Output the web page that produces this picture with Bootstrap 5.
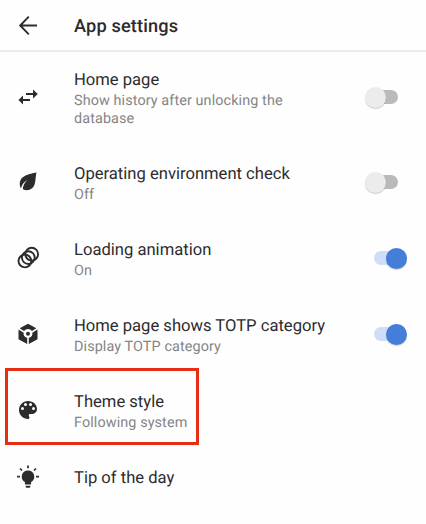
<!DOCTYPE html>
<html lang="en">
<head>
<meta charset="utf-8">
<meta name="viewport" content="width=device-width, initial-scale=1">
<title>App settings</title>
<link href="https://cdn.jsdelivr.net/npm/bootstrap@5.3.0/dist/css/bootstrap.min.css" rel="stylesheet">
<style>
body{font-family:Roboto,"Noto Sans",sans-serif;background:#fefefe;color:#2c2c2e;overflow:hidden;text-rendering:geometricPrecision}
.app-bar{height:52px;border-bottom:2px solid #ececec;padding-left:16px}
.app-title{font-size:18.2px;font-weight:500;letter-spacing:.15px;line-height:24px;margin:3px 0 0 34px}
.setting{height:76px;padding:0 19px 0 16px;border:0;background:none;color:inherit}
.setting-tall{height:92px;padding-bottom:2px}
.setting-short{height:58px}
.setting svg,.app-bar svg{width:24px;height:24px;flex:none;fill:#2c2c2e}
.setting-text{margin-left:34px;margin-top:3px;width:270px}
.setting-tall .setting-text{margin-top:3px}
.setting-name{font-size:16.6px;line-height:22px;white-space:nowrap}
.setting-note{font-size:14.4px;line-height:17.5px;letter-spacing:.1px;color:#858585;max-width:225px}
.toggle{width:42px;height:22px;flex:none}
.toggle::before{content:"";width:28px;height:14px;border-radius:7px;background:#bababa;margin-left:5px}
.toggle-knob{width:21px;height:21px;border-radius:50%;background:#ececec;box-shadow:0 1px 1px #0003;margin-left:-33px}
.toggle-on::before{background:#d0ddf6;margin-left:9px}
.toggle-on .toggle-knob{background:#447ed9;margin-left:-16px}
.highlight{width:194px;height:77px;left:5px;top:-4px;border:3px solid #e72d13}
</style>
<script src="https://cdn.jsdelivr.net/npm/bootstrap@5.3.0/dist/js/bootstrap.bundle.min.js"></script>
</head>
<body>
<header class="app-bar d-flex align-items-center">
<svg viewBox="0 0 24 24"><path d="M21 12.500H4.500M12.800 3.700 4.200 12.500l8.600 8.800" fill="none" stroke="#2c2c2e" stroke-width="1.900"/></svg>
<h1 class="app-title mb-0">App settings</h1>
</header>
<main class="list-group list-group-flush">
<div class="setting setting-tall d-flex align-items-center">
<svg viewBox="0 0 24 24"><path d="M10 8h7V4.500l4.800 4.500-4.800 4.500V10h-7zM14 14H7v-3.500L2.500 15 7 19.500V16h7z"/></svg>
<div class="setting-text"><div class="setting-name">Home page</div><div class="setting-note">Show history after unlocking the database</div></div>
<div class="toggle d-flex align-items-center ms-auto"><span class="toggle-knob"></span></div>
</div>
<div class="setting d-flex align-items-center">
<svg viewBox="0 0 24 24"><path d="M20.500 2.500C14 4 3.500 5 3.800 14.500c0 1.600.5 2.700 1.200 3.700 1-4 3.200-6.500 6.500-8.200-3 2.800-4.500 5.500-4.700 9.300 5.500 2.500 11-.3 12.200-6.300.7-3.600.7-7 1.500-10.500z"/></svg>
<div class="setting-text"><div class="setting-name">Operating environment check</div><div class="setting-note">Off</div></div>
<div class="toggle d-flex align-items-center ms-auto"><span class="toggle-knob"></span></div>
</div>
<div class="setting d-flex align-items-center">
<svg viewBox="0 0 24 24"><g fill="none" stroke="#2c2c2e" stroke-width="1.900"><circle cx="15.700" cy="8.200" r="6.400"/><circle cx="12.300" cy="11.600" r="6.400"/><circle cx="8.900" cy="15" r="6.400"/></g></svg>
<div class="setting-text"><div class="setting-name">Loading animation</div><div class="setting-note">On</div></div>
<div class="toggle toggle-on d-flex align-items-center ms-auto"><span class="toggle-knob"></span></div>
</div>
<div class="setting d-flex align-items-center">
<svg viewBox="0 0 24 24"><path d="M12 1.700 3.700 6.300l4.300 2.700a5.200 5.200 0 0 1 8 0l4.300-2.700zM2.500 7.500v9.700l8.700 4.800v-6.200a4 4 0 0 1-3.500-5zM21.500 7.500v9.700l-8.700 4.800v-6.200a4 4 0 0 0 3.500-5z"/><circle cx="12" cy="11.800" r="2"/></svg>
<div class="setting-text"><div class="setting-name">Home page shows TOTP category</div><div class="setting-note">Display TOTP category</div></div>
<div class="toggle toggle-on d-flex align-items-center ms-auto"><span class="toggle-knob"></span></div>
</div>
<div class="setting d-flex align-items-center position-relative">
<svg viewBox="0 0 24 24"><path d="M12 3c-4.970 0-9 4.030-9 9s4.030 9 9 9c.83 0 1.500-.67 1.500-1.500 0-.39-.15-.74-.39-1.010-.23-.26-.38-.61-.38-.99 0-.83.67-1.500 1.500-1.500H16c2.760 0 5-2.240 5-5 0-4.420-4.030-8-9-8zm-5.500 9a1.500 1.500 0 1 1 0-3 1.500 1.500 0 0 1 0 3zm3-4a1.500 1.500 0 1 1 0-3 1.500 1.500 0 0 1 0 3zm5 0a1.500 1.500 0 1 1 0-3 1.500 1.500 0 0 1 0 3zm3 4a1.500 1.500 0 1 1 0-3 1.500 1.500 0 0 1 0 3z"/></svg>
<div class="setting-text"><div class="setting-name">Theme style</div><div class="setting-note">Following system</div></div>
<span class="highlight position-absolute"></span>
</div>
<div class="setting setting-short d-flex align-items-center">
<svg viewBox="0 0 24 24"><path d="M12 5.500a6.200 6.200 0 0 0-3.100 11.600V19.500h6.200v-2.400A6.200 6.200 0 0 0 12 5.500zM9.700 20.700h4.600v1.100q0 1-1 1h-2.600q-1 0-1-1z"/><path d="M12 .5v2.800M1 11.700h2.900M20.100 11.700H23M4 3.500l2 2M20 3.500l-2 2" stroke="#2c2c2e" stroke-width="1.700"/></svg>
<div class="setting-text"><div class="setting-name">Tip of the day</div></div>
</div>
</main>
</body>
</html>
